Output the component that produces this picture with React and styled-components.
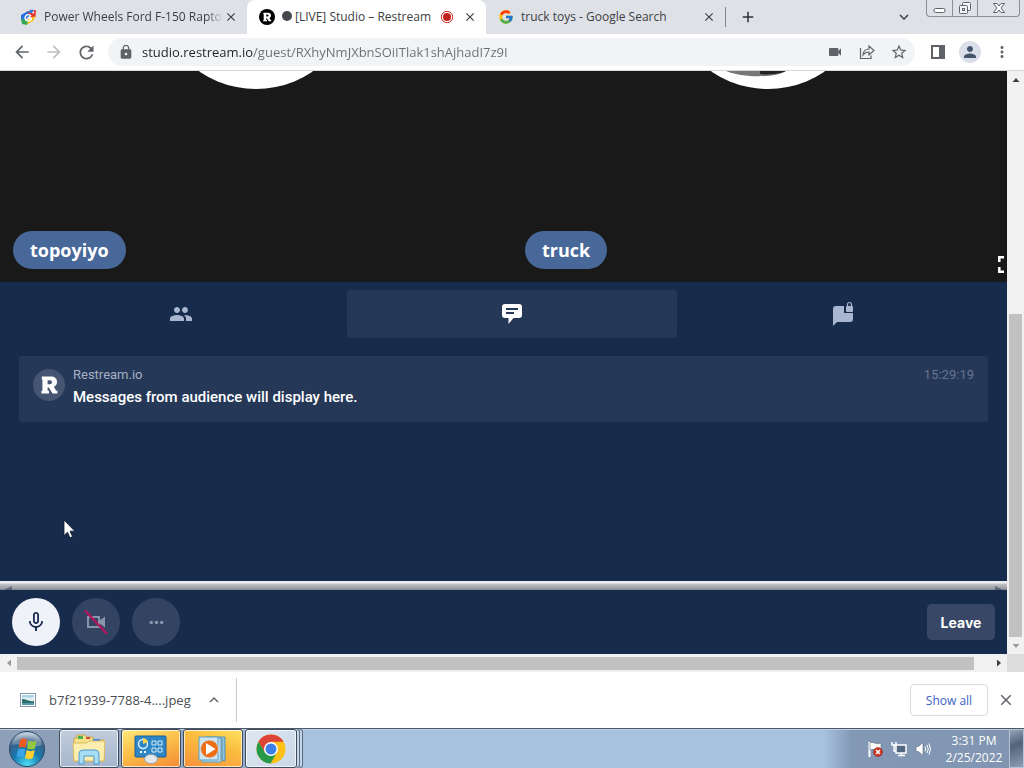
import React from "react";
import styled, { createGlobalStyle, css } from "styled-components";
import {
  MdArrowBack,
  MdArrowForward,
  MdRefresh,
  MdLock,
  MdVideocam,
  MdStarBorder,
  MdPerson,
  MdMoreVert,
  MdMoreHoriz,
  MdClose,
  MdAdd,
  MdExpandMore,
  MdExpandLess,
  MdPeople,
  MdMicNone,
} from "react-icons/md";
import { FcGoogle } from "react-icons/fc";

const GlobalStyle = createGlobalStyle`
  *, *::before, *::after { box-sizing: border-box; }
  body { margin: 0; font-family: "Open Sans", "Noto Sans", sans-serif; }
  button, input { font: inherit; color: inherit; }
  button { padding: 0; border: 0; background: none; }
  svg { display: block; flex: none; }
`;

const Screen = styled.div`
  display: flex;
  flex-direction: column;
  min-height: 100vh;
  overflow: hidden;
  background: #fff;
`;

/* ---------- Tab strip ---------- */

const TabStrip = styled.header`
  display: flex;
  height: 34px;
  padding-left: 8px;
  background: #dee1e6;
  color: #3c4043;
`;

const BrowserTab = styled.div`
  display: flex;
  align-items: center;
  flex: 0 1 239px;
  min-width: 0;
  padding: 0 8px 0 12px;
  font-size: 12px;
  ${(p) =>
    p.$active &&
    css`
      border-radius: 8px 8px 0 0;
      background: #fff;
    `}
`;

const TabTitle = styled.button`
  flex: 1;
  min-width: 0;
  margin-left: 7px;
  line-height: 20px;
  text-align: left;
  white-space: nowrap;
  mask-image: ${(p) => (p.$fade ? "linear-gradient(to left, transparent, #000 16px)" : "none")};
`;

const IconButton = styled.button`
  display: flex;
  align-items: center;
  justify-content: center;
  flex: none;
  width: ${(p) => p.$size || 32}px;
  height: ${(p) => p.$size || 32}px;
  color: ${(p) => p.$color || "#5f6368"};
`;

const RecordingMark = styled.span`
  margin-right: 8px;
`;

const StripDivider = styled.span`
  align-self: center;
  width: 1px;
  height: 20px;
  background: #80868b;
`;

const NewTab = styled(IconButton)`
  align-self: center;
  margin-left: 8px;
`;

const StripEnd = styled.div`
  display: flex;
  align-items: center;
  margin-left: auto;
  padding-right: 4px;
`;

const WindowControls = styled.div`
  display: flex;
  align-self: flex-start;
  height: 17px;
  margin-left: 8px;
  border: 1px solid #8a8f98;
  border-top: 0;
  border-radius: 0 0 4px 4px;
`;

const WindowButton = styled.button`
  display: flex;
  align-items: center;
  justify-content: center;
  width: ${(p) => (p.$wide ? 42 : 25)}px;
  & + & {
    border-left: 1px solid #8a8f98;
  }
`;

/* ---------- Toolbar ---------- */

const Toolbar = styled.nav`
  display: flex;
  align-items: center;
  height: 37px;
  padding: 0 6px;
  border-bottom: 1px solid #d5d7da;
  background: #fff;
`;

const AddressBar = styled.div`
  display: flex;
  align-items: center;
  flex: 1;
  min-width: 0;
  height: 28px;
  margin: 0 7px 0 6px;
  padding-left: 10px;
  border-radius: 14px;
  background: #f1f3f4;
  color: #5f6368;
`;

const AddressInput = styled.input`
  flex: 1;
  min-width: 0;
  height: 24px;
  margin-left: 8px;
  padding: 0;
  border: 0;
  outline: 0;
  font-size: 13px;
  color: #5f6368;
  background: linear-gradient(90deg, #202124 111px, #6a6e73 111px);
  background-clip: text;
  -webkit-text-fill-color: transparent;
`;

const Profile = styled.span`
  display: flex;
  align-items: center;
  justify-content: center;
  width: 22px;
  height: 22px;
  border-radius: 50%;
  background: #dadfe9;
  color: #44546f;
`;

/* ---------- Page viewport ---------- */

const Viewport = styled.div`
  display: grid;
  grid-template-columns: minmax(0, 1fr) 17px;
  grid-template-rows: minmax(0, 1fr) 18px;
  flex: 1;
`;

const Page = styled.main`
  display: flex;
  flex-direction: column;
  overflow: hidden;
  background: #172b4d;
`;

const Stage = styled.section`
  position: relative;
  display: grid;
  grid-template-columns: 1fr 1fr;
  flex: none;
  width: calc(100% + 17px);
  height: 211px;
  overflow: hidden;
  background: #191919;
`;

const Guest = styled.div`
  display: flex;
  flex-direction: column;
  justify-content: space-between;
  align-items: flex-start;
  padding: 0 13px 13px;
`;

const Avatar = styled.div`
  display: flex;
  align-items: flex-end;
  justify-content: center;
  align-self: center;
  width: 200px;
  height: 200px;
  margin-top: -182px;
  overflow: hidden;
  border-radius: 50%;
  background: #fff;
`;

const NamePill = styled.div`
  padding: 0 17px;
  border-radius: 19px;
  background: #486899;
  color: #fff;
  font-size: 18px;
  font-weight: 700;
  line-height: 38px;
`;

const Fullscreen = styled.button`
  position: absolute;
  right: 9px;
  bottom: 9px;
  color: #fff;
`;

const Panel = styled.section`
  position: relative;
  display: flex;
  flex-direction: column;
  flex: 1;
  font-family: Roboto, sans-serif;
`;

const PanelTabs = styled.div`
  display: grid;
  grid-template-columns: repeat(3, 1fr);
  gap: 1px;
  width: calc(100% + 17px);
  padding: 8px 16px 0;
`;

const PanelTab = styled.button`
  display: flex;
  align-items: center;
  justify-content: center;
  height: 48px;
  border-radius: 4px;
  color: ${(p) => (p.$active ? "#fff" : "#a9b6d0")};
  background: ${(p) => (p.$active ? "#253858" : "none")};
`;

const Message = styled.article`
  display: flex;
  gap: 8px;
  height: 66px;
  margin: 18px 19px 0;
  padding: 9px 14px;
  border-radius: 3px;
  background: #253858;
`;

const Badge = styled.span`
  display: flex;
  align-items: center;
  justify-content: center;
  flex: none;
  width: 32px;
  height: 32px;
  margin-top: 4px;
  border-radius: 50%;
  background: #465672;
`;

const MessageBody = styled.div`
  flex: 1;
`;

const MessageMeta = styled.div`
  display: flex;
  justify-content: space-between;
  color: #a5b0c4;
  font-size: 13px;
  line-height: 20px;
`;

const Time = styled.time`
  color: #66758f;
`;

const MessageText = styled.p`
  margin: 2px 0 0;
  color: #fff;
  font-size: 15px;
  font-weight: 500;
  line-height: 20px;
`;

const Pointer = styled.svg`
  position: absolute;
  left: 63px;
  top: 237px;
`;

const Splitter = styled.div`
  display: flex;
  align-items: flex-end;
  justify-content: space-between;
  flex: none;
  height: 9px;
  padding: 0 4px;
  background: linear-gradient(#ececf0 0 2px, #c2c4c8 3px, #93979d 8px, #7b838f);
  color: #44526b;
`;

const CallBar = styled.footer`
  display: flex;
  align-items: center;
  gap: 12px;
  flex: none;
  height: 64px;
  padding: 0 12px;
`;

const RoundButton = styled.button`
  display: flex;
  align-items: center;
  justify-content: center;
  width: 48px;
  height: 48px;
  border-radius: 50%;
  background: ${(p) => (p.$on ? "#f0f2fa" : "#334462")};
  color: ${(p) => (p.$on ? "#172b4d" : "#8995ab")};
`;

const LeaveButton = styled.button`
  width: 68px;
  height: 36px;
  margin-left: auto;
  border-radius: 5px;
  background: #384765;
  color: #fff;
  font-family: Inter, sans-serif;
  font-size: 14px;
  font-weight: 700;
`;

/* ---------- Scroll bars ---------- */

const ScrollTrack = styled.div`
  display: flex;
  flex-direction: ${(p) => (p.$vertical ? "column" : "row")};
  align-items: center;
  background: #f1f1f1;
`;

const ScrollArrow = styled.span`
  display: flex;
  align-items: center;
  justify-content: center;
  width: 17px;
  height: 17px;
  color: ${(p) => (p.$dim ? "#9b9b9b" : "#404040")};
`;

const ScrollThumb = styled.span`
  background: #c1c1c1;
  ${(p) =>
    p.$vertical
      ? css`
          width: 13px;
          flex: 322;
        `
      : css`
          height: 13px;
          flex: 957;
        `}
`;

const ScrollGap = styled.span`
  flex: ${(p) => p.$grow};
`;

const ScrollCorner = styled.div`
  background: #dcdcdc;
`;

/* ---------- Downloads ---------- */

const Downloads = styled.section`
  display: flex;
  align-items: center;
  height: 56px;
  padding: 0 2px 0 20px;
  background: #fff;
  color: #4b4f54;
`;

const DownloadItem = styled.div`
  display: flex;
  align-items: center;
  height: 44px;
  padding-right: 6px;
  border-right: 1px solid #c8cacd;
`;

const FileName = styled.a`
  margin: 0 7px 0 13px;
  color: inherit;
  font-size: 13px;
  text-decoration: none;
`;

const ShowAll = styled.button`
  width: 78px;
  height: 32px;
  margin: 0 2px 0 auto;
  border: 1px solid #dadce0;
  border-radius: 4px;
  color: #3a62c4;
  font-size: 12px;
`;

/* ---------- Taskbar ---------- */

const Taskbar = styled.footer`
  display: flex;
  height: 40px;
  border-top: 1px solid #4b5666;
  background: linear-gradient(90deg, #8e9fb9 0 60px, #9cb3d0 300px, #a7c1df 302px calc(100% - 200px), #8298b5 calc(100% - 172px), #8195b1);
  box-shadow: inset 0 1px 0 #c3d2e4;
`;

const StartButton = styled.button`
  display: flex;
  justify-content: center;
  align-items: center;
  width: 54px;
  margin-right: 5px;
`;

const taskSkins = {
  plain: "linear-gradient(#c2cddd, #a6b6cd)",
  light: "linear-gradient(135deg, #dfe7f1, #c9d7e8)",
  alertLeft: "linear-gradient(160deg, #ffe97a, #fbc04a 45%, #f58a35)",
  alertRight: "linear-gradient(200deg, #ffe262, #fbbd3e 40%, #f5913a)",
};

const TaskButton = styled.button`
  display: flex;
  align-items: center;
  justify-content: center;
  width: ${(p) => p.$width || 60}px;
  margin-right: ${(p) => (p.$grouped ? 0 : 2)}px;
  border: 1px solid #3f4c5e;
  border-radius: 3px;
  box-shadow: inset 0 0 0 1px rgba(255, 255, 255, 0.7);
  background: ${(p) => taskSkins[p.$skin || "plain"]};
`;

const Stacked = styled.span`
  width: 3px;
  border: solid #5d6c80;
  border-width: 1px 1px 1px 0;
  border-radius: 0 3px 3px 0;
  background: #c5d5e8;
`;

const Tray = styled.div`
  display: flex;
  align-items: center;
  gap: 8px;
  margin-left: auto;
  color: #fff;
`;

const Clock = styled.div`
  width: 70px;
  font-size: 12px;
  line-height: 17px;
  text-align: center;
`;

const ShowDesktop = styled.button`
  width: 15px;
  border: 1px solid #b6c4d6;
  background: linear-gradient(160deg, #94a4b8, #52637a 40%, #8b9db5);
`;

/* ---------- Drawings ---------- */

const ShoppingIcon = () => (
  <svg width="17" height="17" viewBox="0 0 17 17">
    <path d="M1 6 8 2 10 6 4 12 1 11Z" fill="#2772df" />
    <path d="M7 2.500 16 1 15.500 8 11 8Z" fill="#e5352c" />
    <path d="M10 .8 14 .8 12 4 8 4Z" fill="#2f7de1" />
    <path d="M15.500 7 13 12 6 16 8 10Z" fill="#fbbc04" />
    <path d="M1 10 8 11 7 16 2 15Z" fill="#34a853" />
    <path d="M11 7.200A3.200 3.200 0 1 0 11.400 9.500H8.600" fill="none" stroke="#fff" strokeWidth="1.400" />
    <circle cx="13.300" cy="3.400" r="1" fill="#fff" />
  </svg>
);

const RestreamMark = ({ size, disc }) => (
  <svg width={size} height={size} viewBox="0 0 16 16">
    {disc && <circle cx="8" cy="8" r="8" fill="#000" />}
    <path
      d="M4.400 3.800H8.800C10.900 3.800 12 4.800 12 6.500C12 7.700 11.400 8.500 10.400 8.900L11.600 10.900H12.200V12.300H9.800L7.900 9.300H7.300V10.900H8V12.300H4.200V10.900H4.700V5.200H4.400ZM7.300 5.600V7.600H8.400C9.100 7.600 9.500 7.200 9.500 6.600S9.100 5.600 8.400 5.600Z"
      fill="#fff"
      fillRule="evenodd"
    />
  </svg>
);

const RecordingIcon = () => (
  <svg width="14" height="14" viewBox="0 0 14 14">
    <circle cx="7" cy="7" r="5.700" fill="none" stroke="#d93025" />
    <circle cx="7" cy="7" r="4" fill="#c5221f" />
  </svg>
);

const MinimizeGlyph = () => (
  <svg width="13" height="17" viewBox="0 0 13 17">
    <rect x="1" y="8.500" width="11" height="4" rx="1.500" fill="#fff" stroke="#5d626b" />
  </svg>
);

const RestoreGlyph = () => (
  <svg width="14" height="16" viewBox="0 0 14 16" fill="#f4f5f7" stroke="#5d626b">
    <rect x="4.500" y="2.500" width="8" height="8" rx="1" />
    <rect x="1.500" y="5.500" width="8" height="8" rx="1" />
    <rect x="4.500" y="8.500" width="2" height="2" />
  </svg>
);

const CloseGlyph = () => (
  <svg width="14" height="16" viewBox="0 0 14 16">
    <path
      d="M1.500 3.500H5L7 6 9 3.500H12.500L9 8 12.500 12.500H9L7 10 5 12.500H1.500L5 8Z"
      fill="#fff"
      stroke="#5d626b"
    />
  </svg>
);

const ShareIcon = () => (
  <svg width="16" height="16" viewBox="0 0 16 16" fill="none" stroke="#5f6368" strokeWidth="1.200">
    <path d="M1.500 4V14.500H12V11.500" />
    <path d="M4 11C4.300 7.500 6.500 5 10 5V2L15 6.500 10 11V8C7.500 8 5.500 9 4 11Z" />
  </svg>
);

const SidePanelIcon = () => (
  <svg width="14" height="14" viewBox="0 0 14 14">
    <rect x="1" y="1" width="12" height="12" fill="none" stroke="#5f6368" strokeWidth="2" />
    <rect x="8" y="1" width="5" height="12" fill="#5f6368" />
  </svg>
);

const FullscreenIcon = () => (
  <svg width="17" height="17" viewBox="0 0 17 17" fill="none" stroke="#fff" strokeWidth="2.500">
    <path d="M1.300 6V1.300H6M1.300 11V15.700H6" />
  </svg>
);

const ChatIcon = () => (
  <svg width="22" height="22" viewBox="0 0 22 22">
    <path
      d="M4 1H18a3 3 0 0 1 3 3V12a3 3 0 0 1-3 3H12.500L7.500 21V15H4a3 3 0 0 1-3-3V4a3 3 0 0 1 3-3Z"
      fill="#fff"
    />
    <path d="M5 6H17M5 10H13" stroke="#253858" strokeWidth="2" />
  </svg>
);

const PrivateChatIcon = () => (
  <svg width="22" height="26" viewBox="0 0 22 26" fill="currentColor">
    <path d="M4 5H12V12H21V18a3 3 0 0 1-3 3H5L1 25V8a3 3 0 0 1 3-3Z" />
    <rect x="14" y="5" width="7" height="6" rx="1" />
    <path d="M15.500 5V3.500a2 2 0 0 1 4 0V5" fill="none" stroke="currentColor" strokeWidth="1.200" />
  </svg>
);

const CameraOffIcon = () => (
  <svg width="24" height="26" viewBox="0 0 24 26">
    <rect x="4" y="8" width="11" height="10" fill="none" stroke="currentColor" strokeWidth="2" />
    <path d="M15 12 21 7.500V18.500L15 14Z" fill="currentColor" />
    <path d="M1 1.500 23 25" stroke="#b3175f" strokeWidth="2.400" />
  </svg>
);

const Triangle = ({ dir }) => {
  const turn = { up: 0, right: 90, down: 180, left: 270 }[dir];
  return (
    <svg width="8" height="8" viewBox="0 0 8 8">
      <path d="M0.500 6 4 2 7.500 6Z" fill="currentColor" transform={`rotate(${turn} 4 4)`} />
    </svg>
  );
};

const SplitterNotch = ({ flip }) => (
  <svg width="8" height="4" viewBox="0 0 8 4">
    <path d={flip ? "M0 0 8 4H0Z" : "M8 0 0 4H8Z"} fill="currentColor" opacity="0.700" />
  </svg>
);

const ImageFileIcon = () => (
  <svg width="16" height="14" viewBox="0 0 16 14">
    <rect x="0.500" y="0.500" width="15" height="13" fill="#fff" stroke="#8796a8" />
    <rect x="2" y="2" width="12" height="10" fill="#a8d3e8" />
    <path d="M2 5C6 3 8 6 14 4V9H2Z" fill="#e2f0ed" />
    <path d="M2 6C6 6 9 9 14 8V12H2Z" fill="#2d6e70" />
    <path d="M2 10H14V12H2Z" fill="#5599b0" />
  </svg>
);

const WindowsOrb = () => (
  <svg width="38" height="38" viewBox="0 0 38 38">
    <defs>
      <radialGradient id="orb" cx="50%" cy="95%" r="90%">
        <stop offset="0" stopColor="#4fe0f7" />
        <stop offset="0.450" stopColor="#157bb0" />
        <stop offset="0.800" stopColor="#3a5f86" />
        <stop offset="1" stopColor="#b7c8d8" />
      </radialGradient>
    </defs>
    <circle cx="19" cy="19" r="17.500" fill="url(#orb)" stroke="#2b4764" />
    <path d="M4 15A15.500 15.500 0 0 1 34 15C26 19 12 12 4 15Z" fill="#fff" opacity="0.250" />
    <path d="M12 10C14 8 17 8 19 10L17.500 18C15 16.500 13 16.500 10.500 18Z" fill="#ee5a24" />
    <path d="M20.500 10.500C23 12 26 12 28.500 10.500L27 18.500C24 20 21.500 19.500 19 18.500Z" fill="#94c83d" />
    <path d="M10 19.500C12.500 18 15 18 17.200 19.500L15.500 27.500C13 26 11 26 8.500 27.500Z" fill="#37a5e8" />
    <path d="M18.700 20C21 21.500 24 21.500 26.700 20L25 28C22.500 29.500 19.500 29.500 17 28Z" fill="#ffd02e" />
  </svg>
);

const ExplorerIcon = () => (
  <svg width="34" height="32" viewBox="0 0 34 32">
    <path d="M2 5H5V2H13L15 4H21V7H32V28H2Z" fill="#f6e08a" stroke="#c7a648" />
    <path d="M6 3H11V6H6Z" fill="#4caf50" />
    <path d="M14 4H18V6H14Z" fill="#d64b3a" />
    <path d="M21 6H28V9H21Z" fill="#4a86d8" />
    <path d="M1 10H15L17 8H33L32 28H2Z" fill="#fbeeae" stroke="#d9bd62" />
    <path d="M7 31V21Q7 17 11 17H23Q27 17 27 21V31H22V23H12V31Z" fill="#a9dcf5" stroke="#499bd0" />
  </svg>
);

const ControlPanelIcon = () => (
  <svg width="34" height="30" viewBox="0 0 34 30">
    <rect x="1" y="2" width="31" height="21" rx="1" fill="#2f86c4" stroke="#1d5f99" />
    <circle cx="9" cy="10" r="4.500" fill="none" stroke="#d6eefb" strokeWidth="1.500" />
    <path d="M9 10V4A6 6 0 0 1 14 8Z" fill="#ffd34c" />
    <path d="M18 7H22V11H18ZM24 7H28V11H24ZM18 14H22V18H18ZM24 14H28V18H24Z" fill="#2f86c4" stroke="#d6eefb" />
    <path d="M6 18H8M10 18H12" stroke="#fff" strokeWidth="2" />
    <ellipse cx="17" cy="25" rx="6.500" ry="4.500" fill="#e4e8ec" stroke="#98a4af" />
  </svg>
);

const MediaPlayerIcon = () => (
  <svg width="30" height="28" viewBox="0 0 30 28">
    <path d="M8 2H27V26L24 25V4H8Z" fill="#8fc4df" stroke="#4f90b5" />
    <path d="M4 3H23V27H4Z" fill="#b8dcef" stroke="#5d9fc2" />
    <path d="M1 2H20V25H1Z" fill="#cbe5f2" stroke="#5d9fc2" />
    <circle cx="11.500" cy="14" r="9" fill="#ec6f16" stroke="#d3d8dc" />
    <path d="M8 8 17.500 14 8 20Z" fill="#fff" />
  </svg>
);

const ChromeIcon = () => (
  <svg width="30" height="30" viewBox="0 0 30 30">
    <circle cx="15" cy="15" r="14.500" fill="#fbc116" />
    <path d="M15 15 8.900 18.500 2.440 7.750A14.500 14.500 0 0 1 27.560 7.750H15Z" fill="#dd4337" />
    <path d="M15 22 8.900 18.500 2.440 7.750A14.500 14.500 0 0 0 14.500 29.500L21 18.500Z" fill="#27994a" />
    <circle cx="15" cy="15" r="7" fill="#fff" />
    <circle cx="15" cy="15" r="5.500" fill="#3d7ee8" />
  </svg>
);

const FlagIcon = () => (
  <svg width="16" height="18" viewBox="0 0 16 18">
    <path d="M2.500 2V17" stroke="#fff" strokeWidth="2" />
    <path d="M3 3C6 1 8 5 14 3V9C9 11 7 8 3 10Z" fill="#fff" stroke="#4a5b70" strokeWidth="0.500" />
    <circle cx="11" cy="12" r="4.500" fill="#cf3526" stroke="#8f2018" strokeWidth="0.500" />
    <path d="M9 10 13 14M13 10 9 14" stroke="#fff" strokeWidth="1.500" />
  </svg>
);

const NetworkIcon = () => (
  <svg width="16" height="16" viewBox="0 0 16 16">
    <rect x="5" y="4" width="10" height="8" fill="#526780" stroke="#fff" strokeWidth="1.500" />
    <path d="M7 14.500H14M10.500 12V14" stroke="#fff" strokeWidth="1.500" />
    <path d="M1 1V4H5V1M3 4V10H5" fill="none" stroke="#fff" strokeWidth="1.500" />
  </svg>
);

const SpeakerIcon = () => (
  <svg width="16" height="16" viewBox="0 0 16 16">
    <path d="M1 5.500H3.500L8 1.500V14.500L3.500 10.500H1Z" fill="#fff" stroke="#4a5b70" strokeWidth="0.500" />
    <path d="M10 5.500Q11.500 8 10 10.500M12 4Q14.500 8 12 12M14 2.500Q17 8 14 13.500" fill="none" stroke="#fff" />
  </svg>
);

/* ---------- App ---------- */

const browserTabs = [
  { title: "Power Wheels Ford F-150 Rapto", icon: <ShoppingIcon />, fade: true },
  {
    title: "[LIVE] Studio – Restream",
    icon: <RestreamMark size={16} disc />,
    active: true,
  },
  { title: "truck toys - Google Search", icon: <FcGoogle size={16} /> },
];

const LiveDot = styled.span`
  display: inline-block;
  width: 10px;
  height: 10px;
  margin-right: 3px;
  border-radius: 50%;
  background: #45484c;
`;

export default function App() {
  return (
    <>
      <GlobalStyle />
      <Screen>
        <TabStrip>
          {browserTabs.map((tab) => (
            <BrowserTab key={tab.title} $active={tab.active}>
              {tab.icon}
              <TabTitle $fade={tab.fade}>
                {tab.active && <LiveDot />}
                {tab.title}
              </TabTitle>
              {tab.active && (
                <RecordingMark>
                  <RecordingIcon />
                </RecordingMark>
              )}
              <IconButton $size={16} $color="#3c4043" aria-label="Close tab">
                <MdClose size={14} />
              </IconButton>
            </BrowserTab>
          ))}
          <StripDivider />
          <NewTab $size={28} $color="#2f3236" aria-label="New tab">
            <MdAdd size={18} />
          </NewTab>
          <StripEnd>
            <IconButton $size={28} $color="#3c4043" aria-label="Search tabs">
              <MdExpandMore size={18} />
            </IconButton>
            <WindowControls>
              <WindowButton aria-label="Minimize">
                <MinimizeGlyph />
              </WindowButton>
              <WindowButton aria-label="Restore">
                <RestoreGlyph />
              </WindowButton>
              <WindowButton $wide aria-label="Close window">
                <CloseGlyph />
              </WindowButton>
            </WindowControls>
          </StripEnd>
        </TabStrip>

        <Toolbar>
          <IconButton aria-label="Back">
            <MdArrowBack size={20} />
          </IconButton>
          <IconButton $color="#bcbfc3" aria-label="Forward">
            <MdArrowForward size={20} />
          </IconButton>
          <IconButton aria-label="Reload">
            <MdRefresh size={21} />
          </IconButton>
          <AddressBar>
            <MdLock size={16} />
            <AddressInput
              aria-label="Address"
              defaultValue="studio.restream.io/guest/RXhyNmJXbnSOiITlak1shAjhadI7z9I"
            />
            <IconButton aria-label="Camera access">
              <MdVideocam size={16} />
            </IconButton>
            <IconButton aria-label="Share">
              <ShareIcon />
            </IconButton>
            <IconButton aria-label="Bookmark">
              <MdStarBorder size={18} />
            </IconButton>
          </AddressBar>
          <IconButton aria-label="Side panel">
            <SidePanelIcon />
          </IconButton>
          <IconButton aria-label="Profile">
            <Profile>
              <MdPerson size={18} />
            </Profile>
          </IconButton>
          <IconButton aria-label="Menu">
            <MdMoreVert size={18} />
          </IconButton>
        </Toolbar>

        <Viewport>
          <Page>
            <Stage>
              <Guest>
                <Avatar />
                <NamePill>topoyiyo</NamePill>
              </Guest>
              <Guest>
                <Avatar>
                  <svg width="200" height="200" viewBox="0 0 200 200">
                    <path d="M58 182H118C108 189 75 189 58 182Z" fill="#777" />
                    <path d="M92 182H118C112 185 100 186 92 185Z" fill="#222" />
                  </svg>
                </Avatar>
                <NamePill>truck</NamePill>
              </Guest>
              <Fullscreen aria-label="Full screen">
                <FullscreenIcon />
              </Fullscreen>
            </Stage>

            <Panel>
              <PanelTabs role="tablist">
                <PanelTab role="tab" aria-label="People">
                  <MdPeople size={24} />
                </PanelTab>
                <PanelTab role="tab" aria-label="Chat" aria-selected="true" $active>
                  <ChatIcon />
                </PanelTab>
                <PanelTab role="tab" aria-label="Private chat">
                  <PrivateChatIcon />
                </PanelTab>
              </PanelTabs>
              <Message>
                <Badge>
                  <RestreamMark size={32} />
                </Badge>
                <MessageBody>
                  <MessageMeta>
                    <span>Restream.io</span>
                    <Time>15:29:19</Time>
                  </MessageMeta>
                  <MessageText>Messages from audience will display here.</MessageText>
                </MessageBody>
              </Message>
              <Pointer width="13" height="20" viewBox="0 0 13 20" aria-hidden="true">
                <path
                  d="M1 1V16.500L4.500 13.200 7 18.800 9.500 17.600 7 12.200H11.800Z"
                  fill="#fff"
                  stroke="#0c1830"
                  strokeWidth="0.800"
                />
              </Pointer>
            </Panel>

            <Splitter>
              <SplitterNotch />
              <SplitterNotch flip />
            </Splitter>

            <CallBar>
              <RoundButton $on aria-label="Mute microphone">
                <MdMicNone size={24} />
              </RoundButton>
              <RoundButton aria-label="Turn camera on">
                <CameraOffIcon />
              </RoundButton>
              <RoundButton aria-label="More options">
                <MdMoreHoriz size={21} />
              </RoundButton>
              <LeaveButton>Leave</LeaveButton>
            </CallBar>
          </Page>

          <ScrollTrack $vertical aria-hidden="true">
            <ScrollArrow>
              <Triangle dir="up" />
            </ScrollArrow>
            <ScrollGap $grow={226} />
            <ScrollThumb $vertical />
            <ScrollArrow $dim>
              <Triangle dir="down" />
            </ScrollArrow>
          </ScrollTrack>

          <ScrollTrack aria-hidden="true">
            <ScrollArrow $dim>
              <Triangle dir="left" />
            </ScrollArrow>
            <ScrollThumb />
            <ScrollGap $grow={16} />
            <ScrollArrow>
              <Triangle dir="right" />
            </ScrollArrow>
          </ScrollTrack>
          <ScrollCorner />
        </Viewport>

        <Downloads>
          <DownloadItem>
            <ImageFileIcon />
            <FileName href="#file">b7f21939-7788-4....jpeg</FileName>
            <IconButton $size={32} aria-label="Download options">
              <MdExpandLess size={18} />
            </IconButton>
          </DownloadItem>
          <ShowAll>Show all</ShowAll>
          <IconButton aria-label="Close downloads">
            <MdClose size={18} />
          </IconButton>
        </Downloads>

        <Taskbar>
          <StartButton aria-label="Start">
            <WindowsOrb />
          </StartButton>
          <TaskButton aria-label="Explorer">
            <ExplorerIcon />
          </TaskButton>
          <TaskButton $skin="alertLeft" aria-label="Control Panel">
            <ControlPanelIcon />
          </TaskButton>
          <TaskButton $skin="alertRight" aria-label="Media Player">
            <MediaPlayerIcon />
          </TaskButton>
          <TaskButton $skin="light" $width={52} $grouped aria-label="Chrome">
            <ChromeIcon />
          </TaskButton>
          <Stacked />
          <Stacked />
          <Tray>
            <FlagIcon />
            <NetworkIcon />
            <SpeakerIcon />
            <Clock>
              3:31 PM
              <br />
              2/25/2022
            </Clock>
          </Tray>
          <ShowDesktop aria-label="Show desktop" />
        </Taskbar>
      </Screen>
    </>
  );
}
